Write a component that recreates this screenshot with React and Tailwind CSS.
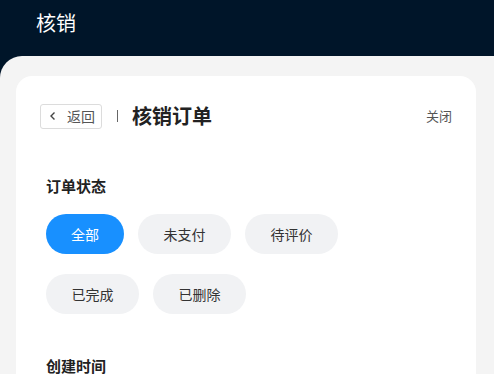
import React from "react";

const statuses = [["全部", "未支付", "待评价"], ["已完成", "已删除"]];

export default function App() {
  const active = "全部";

  return (
    <div className="min-h-screen bg-[#001529] font-['Noto_Sans_CJK_SC','Noto_Sans',sans-serif] overflow-hidden">
      {/* 顶栏 */}
      <header className="h-14 flex items-center px-9 pb-[10px]">
        <h1 className="text-xl text-white">核销</h1>
      </header>

      {/* 内容区 */}
      <div className="bg-[#f4f4f4] rounded-tl-[22px] pl-4 pr-[18px] pt-5 h-[330px]">
        <div className="bg-white rounded-2xl px-6 pt-[26px] h-[330px]">
          {/* 标题行 */}
          <div className="flex items-center">
            <button className="flex items-center gap-[10px] h-[25px] pl-2 pr-[6px] border border-[#dcdcdc] rounded-[3px] text-sm text-[#555]">
              <svg width="8" height="10" viewBox="0 0 8 10" className="text-[#444]">
                <path d="M5.5 1.5 L2 5 L5.5 8.5" fill="none" stroke="currentColor" strokeWidth="1.4" />
              </svg>
              返回
            </button>
            <span className="ml-[15px] w-px h-3 bg-[#666]"></span>
            <span className="ml-[14px] text-xl font-bold text-[#222]">核销订单</span>
            <span className="ml-auto text-[13px] text-[#555]">关闭</span>
          </div>

          {/* 订单状态 */}
          <div className="mt-[46px] pl-[6px]">
            <h2 className="text-[15px] font-bold text-[#222] leading-5">订单状态</h2>
            <div className="mt-[18px] flex flex-col gap-5">
              {statuses.map((row, i) => (
                <div key={i} className="flex gap-[14px]">
                  {row.map((s) => (
                    <span
                      key={s}
                      className={
                        s === active
                          ? "h-10 px-[25px] rounded-full flex items-center text-sm bg-[#1890ff] text-white"
                          : "h-10 px-[25.5px] rounded-full flex items-center text-sm bg-[#f1f2f4] text-[#333]"
                      }
                    >
                      {s}
                    </span>
                  ))}
                </div>
              ))}
            </div>

            <h2 className="mt-[42px] text-[15px] font-bold text-[#222] leading-5">创建时间</h2>
          </div>
        </div>
      </div>
    </div>
  );
}
